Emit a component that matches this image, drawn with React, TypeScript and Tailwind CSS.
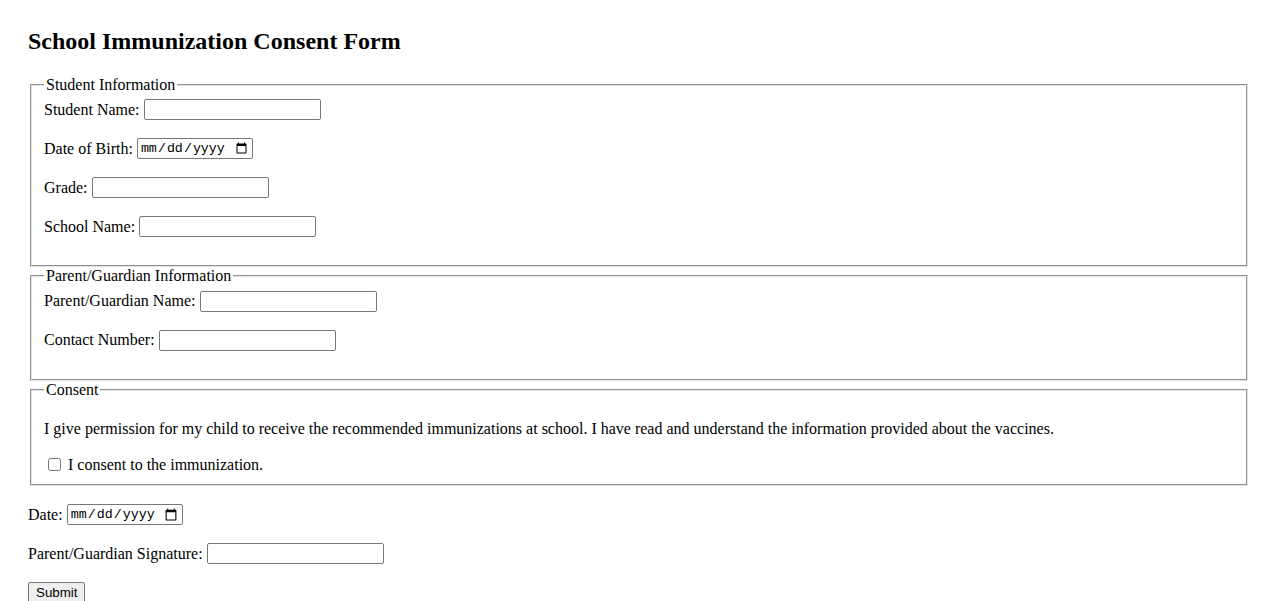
import React from 'react';

const textInput =
  'w-[177px] h-[21px] border border-[#767676] rounded-[2px] px-[2px] bg-white font-["Liberation_Sans",Arial,sans-serif] text-[13.33px]';
const dateInput =
  'w-[116px] h-[21px] border border-[#767676] rounded-[2px] pl-[2px] pr-[2px] py-[1px] bg-white font-["Liberation_Mono",monospace] text-[13.33px] text-black';
const fieldsetCls =
  'mx-[2px] px-[12px] pt-[5.6px] pb-[10px] border-2 [border-style:groove] border-[#e4e4e4]';

const Row: React.FC<{ label: string; children: React.ReactNode }> = ({ label, children }) => (
  <div className="flex h-[21px] items-center gap-[4px] mb-[18px]">
    <label>{label}</label>
    {children}
  </div>
);

export default function App() {
  return (
    <div className="min-h-screen bg-white px-[28px] pt-[28px] font-['Liberation_Serif','Times_New_Roman',serif] text-[16px] leading-[normal] text-black">
      <h2 className="text-[24px] font-bold leading-[27.6px] mb-[20px]">School Immunization Consent Form</h2>

      <form onSubmit={(e) => e.preventDefault()}>
        {/* Student Information */}
        <fieldset className={fieldsetCls}>
          <legend className="px-[2px]">Student Information</legend>
          <Row label="Student Name:">
            <input type="text" className={textInput} />
          </Row>
          <Row label="Date of Birth:">
            <input type="date" className={dateInput} />
          </Row>
          <Row label="Grade:">
            <input type="text" className={textInput} />
          </Row>
          <Row label="School Name:">
            <input type="text" className={textInput} />
          </Row>
        </fieldset>

        {/* Parent / Guardian */}
        <fieldset className={fieldsetCls}>
          <legend className="px-[2px]">Parent/Guardian Information</legend>
          <Row label="Parent/Guardian Name:">
            <input type="text" className={textInput} />
          </Row>
          <Row label="Contact Number:">
            <input type="tel" className={textInput} />
          </Row>
        </fieldset>

        {/* Consent */}
        <fieldset className={fieldsetCls}>
          <legend className="px-[2px]">Consent</legend>
          <p className="mt-[16px] mb-[17px]">
            I give permission for my child to receive the recommended immunizations at school. I have read and
            understand the information provided about the vaccines.
          </p>
          <div className="flex items-center h-[19px]">
            <input type="checkbox" id="consent" className="w-[13px] h-[13px] ml-[4px] mr-[3px] my-[3px]" />
            <label htmlFor="consent" className="ml-[4px]">
              I consent to the immunization.
            </label>
          </div>
        </fieldset>

        <div className="h-[18px]" />
        <Row label="Date:">
          <input type="date" className={dateInput} />
        </Row>
        <Row label="Parent/Guardian Signature:">
          <input type="text" className={textInput} />
        </Row>

        <button
          type="submit"
          className="h-[21px] px-[7px] border border-[#767676] rounded-[2px] bg-[#efefef] font-['Liberation_Sans',Arial,sans-serif] text-[13.33px] text-black"
        >
          Submit
        </button>
      </form>
    </div>
  );
}
